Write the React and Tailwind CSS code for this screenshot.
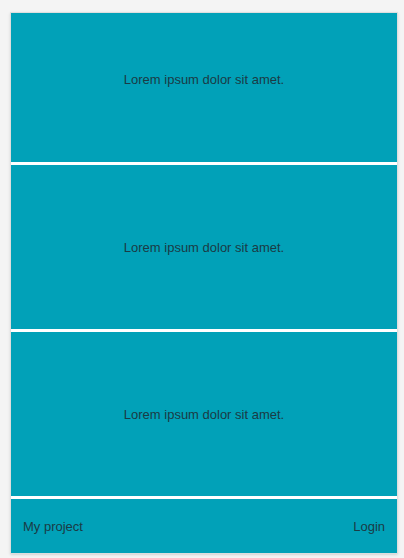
export default function App() {
  return (
    <div className="min-h-[558px] bg-[#f4f4f4] pt-[12px] font-['Liberation_Sans',Arial,sans-serif] text-[13px] text-[#1b3b45]">
      <div className="mx-[10px] flex w-[388px] flex-col gap-[3px] border border-[#dedede] bg-white shadow-sm">
        <div className="flex h-[149px] justify-center bg-[#01a1b8] pt-[57px]">
          Lorem ipsum dolor sit amet.
        </div>
        <div className="flex h-[164px] items-center justify-center bg-[#01a1b8] pt-[2px]">
          Lorem ipsum dolor sit amet.
        </div>
        <div className="flex h-[164px] items-center justify-center bg-[#01a1b8] pt-[2px]">
          Lorem ipsum dolor sit amet.
        </div>
        <div className="flex h-[54px] items-center justify-between bg-[#01a1b8] px-[12px] pt-[2px]">
          <span>My project</span>
          <span>Login</span>
        </div>
      </div>
    </div>
  )
}
